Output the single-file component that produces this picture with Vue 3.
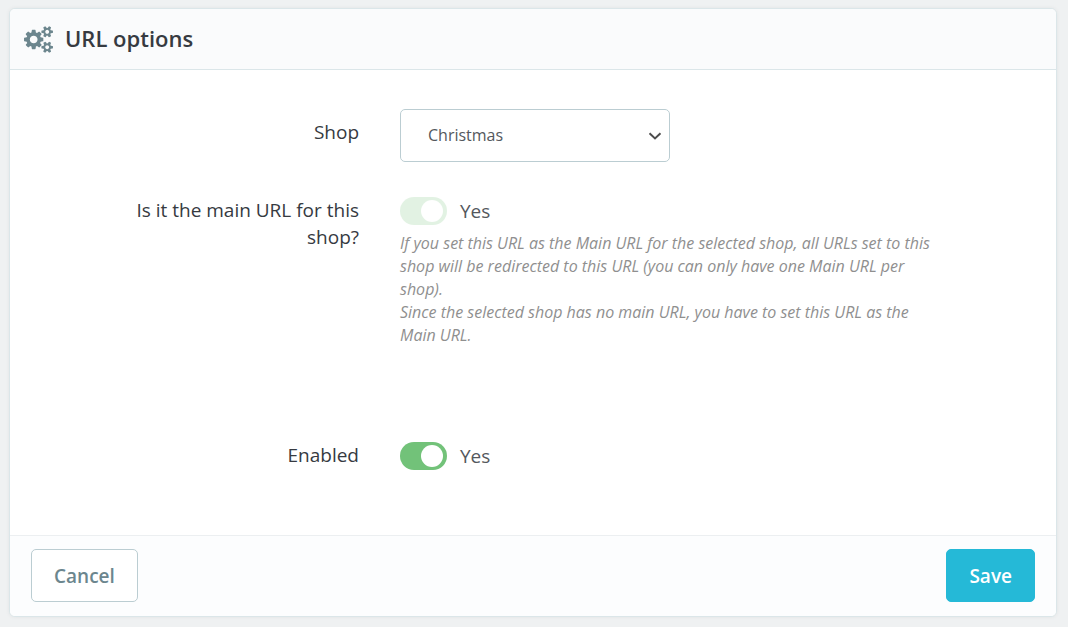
<script setup>
import { ref } from 'vue'

const shop = ref('Christmas')
const isMain = ref(true)
const enabled = ref(true)
</script>

<template>
  <form class="card" @submit.prevent>
    <header class="card-header">
      <svg class="cogs" viewBox="0 0 1920 1792" aria-hidden="true">
        <path d="M896 896q0-106-75-181t-181-75-181 75-75 181 75 181 181 75 181-75 75-181zm768 512q0-52-38-90t-90-38-90 38-38 90q0 53 37.5 90.5t90.5 37.5 90.5-37.5 37.5-90.5zm0-1024q0-52-38-90t-90-38-90 38-38 90q0 53 37.5 90.5t90.5 37.5 90.5-37.5 37.5-90.5zm-384 421v185q0 10-7 19.5t-16 10.5l-155 24q-11 35-32 76 34 48 90 115 7 11 7 20 0 12-7 19-23 30-82.5 89.5t-78.5 59.5q-11 0-21-7l-115-90q-37 19-77 31-11 108-23 155-7 24-30 24h-186q-11 0-20-7.5t-10-17.5l-23-153q-34-10-75-31l-118 89q-7 7-20 7-11 0-21-8-144-133-144-160 0-9 7-19 10-14 41-53t47-61q-23-44-35-82l-152-24q-10-1-17-9.5t-7-19.5v-185q0-10 7-19.5t16-10.5l155-24q11-35 32-76-34-48-90-115-7-11-7-20 0-12 7-20 22-30 82-89t79-59q11 0 21 7l115 90q34-18 77-32 11-108 23-154 7-24 30-24h186q11 0 20 7.5t10 17.5l23 153q34 10 75 31l118-89q8-7 20-7 11 0 21 8 144 133 144 160 0 8-7 19-12 16-42 54t-45 60q23 48 34 82l152 23q10 2 17 10.5t7 19.5zm640 533v140q0 16-149 31-12 27-30 52 51 113 51 138 0 4-4 7-122 71-124 71-8 0-46-47t-52-68q-20 2-30 2t-30-2q-14 21-52 68t-46 47q-2 0-124-71-4-3-4-7 0-25 51-138-18-25-30-52-149-15-149-31v-140q0-16 149-31 13-29 30-52-51-113-51-138 0-4 4-7 4-2 35-20t59-34 30-16q8 0 46 46.5t52 67.5q20-2 30-2t30 2q51-71 92-112l6-2q4 0 124 70 4 3 4 7 0 25-51 138 17 23 30 52 149 15 149 31zm0-1024v140q0 16-149 31-12 27-30 52 51 113 51 138 0 4-4 7-122 71-124 71-8 0-46-47t-52-68q-20 2-30 2t-30-2q-14 21-52 68t-46 47q-2 0-124-71-4-3-4-7 0-25 51-138-18-25-30-52-149-15-149-31v-140q0-16 149-31 13-29 30-52-51-113-51-138 0-4 4-7 4-2 35-20t59-34 30-16q8 0 46 46.5t52 67.5q20-2 30-2t30 2q51-71 92-112l6-2q4 0 124 70 4 3 4 7 0 25-51 138 17 23 30 52 149 15 149 31z" />
      </svg>
      <h3 class="title">URL options</h3>
    </header>

    <div class="card-body">
      <div class="row">
        <label class="label select-label" for="shop">Shop</label>
        <div class="select-wrap">
          <select id="shop" v-model="shop" class="select">
            <option>Christmas</option>
          </select>
          <svg class="chevron" viewBox="0 0 14 8" aria-hidden="true">
            <path d="M1.5 1.2 7 6.4 12.5 1.2" />
          </svg>
        </div>
      </div>

      <div class="row main-row">
        <label class="label" for="main-url">Is it the main URL for this shop?</label>
        <div>
          <div class="switch">
            <input id="main-url" v-model="isMain" class="toggle" type="checkbox" role="switch" disabled />
            <span>{{ isMain ? 'Yes' : 'No' }}</span>
          </div>
          <p class="help">
            If you set this URL as the Main URL for the selected shop, all URLs set to this shop will be redirected to this URL (you can only have one Main URL per shop).<br />
            Since the selected shop has no main URL, you have to set this URL as the Main URL.
          </p>
        </div>
      </div>

      <div class="row">
        <label class="label" for="enabled">Enabled</label>
        <div class="switch">
          <input id="enabled" v-model="enabled" class="toggle" type="checkbox" role="switch" />
          <span>{{ enabled ? 'Yes' : 'No' }}</span>
        </div>
      </div>
    </div>

    <footer class="card-footer">
      <button class="btn cancel" type="button">Cancel</button>
      <button class="btn save" type="submit">Save</button>
    </footer>
  </form>
</template>

<style>
body {
  background: #eff1f2;
}
</style>

<style scoped>
.card {
  margin: 8px 11px 10px 9px;
  border: 1px solid #dbe6e9;
  border-radius: 6px;
  background: #fff;
  box-shadow: 0 0 4px rgba(0, 0, 0, 0.06);
  overflow: hidden;
  color: #363a41;
  font-family: "Open Sans", "Noto Sans", sans-serif;
  font-size: 19px;
  line-height: 27px;
}

.card-header {
  display: flex;
  align-items: center;
  gap: 12px;
  height: 60px;
  padding: 0 14px;
  border-bottom: 1px solid #dbe6e9;
  background: #fafbfc;
}

.cogs {
  width: 29px;
  height: 27px;
  fill: #6c868e;
}

.title {
  margin: 0;
  padding-bottom: 2px;
  font-size: 22px;
  font-weight: 600;
}

.card-body {
  display: flex;
  flex-direction: column;
  gap: 35px;
  padding: 39px 114px 65px 78px;
}

.row {
  display: grid;
  grid-template-columns: 1fr 2fr;
  column-gap: 41px;
}

.main-row {
  margin-bottom: 60px;
}

.label {
  text-align: right;
}

.select-label {
  padding-top: 10px;
}

.select-wrap {
  position: relative;
  width: 270px;
}

.select {
  display: block;
  width: 100%;
  height: 53px;
  padding: 0 27px 2px;
  border: 1px solid #bbcdd2;
  border-radius: 5px;
  background: #fff;
  color: #54585d;
  font-family: inherit;
  font-size: 16px;
  appearance: none;
}

.chevron {
  position: absolute;
  top: 23px;
  right: 8px;
  width: 14px;
  height: 8px;
  fill: none;
  stroke: #4d4d4d;
  stroke-width: 2;
  pointer-events: none;
}

.switch {
  display: flex;
  align-items: center;
  gap: 13px;
  height: 28px;
  color: #54585d;
}

.toggle {
  display: flex;
  align-items: center;
  justify-content: flex-end;
  width: 47px;
  height: 28px;
  margin: 0;
  padding: 0 4px;
  border-radius: 14px;
  background: #72c279;
  appearance: none;
}

.toggle:not(:checked) {
  justify-content: flex-start;
  background: #b3c7cd;
}

.toggle::before {
  width: 22px;
  height: 22px;
  border-radius: 50%;
  background: #fff;
  content: "";
}

.toggle:disabled {
  opacity: 0.2;
}

.help {
  margin: 7px 0 0;
  color: #8f8f8f;
  font-size: 16px;
  font-style: italic;
  line-height: 23px;
}

.card-footer {
  display: flex;
  justify-content: space-between;
  padding: 13px 21px 14px;
  border-top: 1px solid #eceff1;
  background: #fcfdfe;
}

.btn {
  height: 53px;
  padding: 0 22px;
  border: 1px solid #bbcdd2;
  border-radius: 5px;
  font-family: inherit;
  font-size: 19px;
  font-weight: 600;
}

.cancel {
  background: #fff;
  color: #6c868e;
}

.save {
  border-color: #25b9d7;
  background: #25b9d7;
  color: #fff;
}
</style>
